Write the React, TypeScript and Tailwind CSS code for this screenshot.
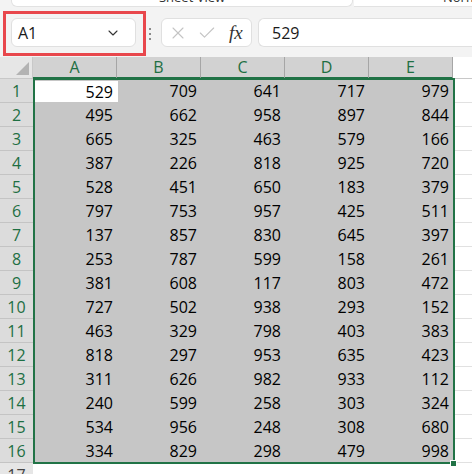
import { X, Check, ChevronDown } from "lucide-react";

const data: number[][] = [
  [529, 709, 641, 717, 979],
  [495, 662, 958, 897, 844],
  [665, 325, 463, 579, 166],
  [387, 226, 818, 925, 720],
  [528, 451, 650, 183, 379],
  [797, 753, 957, 425, 511],
  [137, 857, 830, 645, 397],
  [253, 787, 599, 158, 261],
  [381, 608, 117, 803, 472],
  [727, 502, 938, 293, 152],
  [463, 329, 798, 403, 383],
  [818, 297, 953, 635, 423],
  [311, 626, 982, 933, 112],
  [240, 599, 258, 303, 324],
  [534, 956, 248, 308, 680],
  [334, 829, 298, 479, 998],
];

const cols = ["A", "B", "C", "D", "E"];

export default function App() {
  return (
    <div className="relative w-[472px] h-[474px] overflow-hidden bg-white font-['Open_Sans',sans-serif] text-black">
      <Toolbar />
      <Grid />
      {/* selection frame */}
      <div className="absolute left-[33px] top-[78px] w-[422px] h-[386px] border-2 border-[#217346] pointer-events-none" />
      <div className="absolute left-[450px] top-[460px] w-[7px] h-[7px] bg-[#217346] border border-white" />
    </div>
  );
}

function Toolbar() {
  return (
    <div className="h-[57px] bg-[#f3f3f3] flex flex-col">
      <div className="h-[7px] flex overflow-hidden">
        <div className="ml-[11px] w-[342px] h-[7px] bg-white rounded-b-md border-x border-b border-[#e2e2e2] flex justify-center overflow-hidden">
          <span className="-mt-[12px] ml-[20px] text-[13px] text-[#333]">Sheet View</span>
        </div>
        <div className="ml-px flex-1 h-[7px] bg-white border-b border-[#e2e2e2] overflow-hidden">
          <span className="block -mt-[12px] ml-[89px] text-[13px] text-[#333]">Normal</span>
        </div>
      </div>
      <div className="mt-[4px] flex items-start">
        <div className="ml-[3px] w-[143px] h-[45px] border-[3px] border-[#e8474c] pl-[5px] pt-[4px]">
          <div className="w-[125px] h-[29px] bg-white border border-[#e0e0e0] rounded-md flex items-center pl-[6px] pr-[14px]">
            <span className="text-[16px] text-[#1a1a1a] flex-1">A1</span>
            <ChevronDown className="w-[16px] h-[16px] text-[#333]" strokeWidth={1.6} />
          </div>
        </div>
        <div className="ml-[3px] mt-[17px] flex flex-col gap-[3px]">
          <div className="w-[2px] h-[2px] bg-[#8a8a8a]" />
          <div className="w-[2px] h-[2px] bg-[#8a8a8a]" />
          <div className="w-[2px] h-[2px] bg-[#8a8a8a]" />
        </div>
        <div className="ml-[10px] mt-[7px] w-[91px] h-[29px] bg-white border border-[#e0e0e0] rounded-md flex items-center pl-[6px]">
          <X className="w-[20px] h-[20px] text-[#c4c4c4]" strokeWidth={1.3} />
          <Check className="ml-[9px] w-[20px] h-[20px] text-[#c4c4c4]" strokeWidth={1.3} />
          <span className="ml-[12px] text-[19px] italic font-['Liberation_Serif',serif] text-[#333] leading-none">fx</span>
        </div>
        <div className="ml-[6px] mt-[7px] flex-1 h-[29px] bg-white border border-r-0 border-[#e0e0e0] rounded-l-md flex items-center pl-[13px]">
          <span className="text-[16px] text-[#1a1a1a]">529</span>
        </div>
      </div>
    </div>
  );
}

function Grid() {
  return (
    <div className="flex flex-col">
      <div className="flex h-[22px]">
        <div className="relative w-[33px] bg-[#e6e6e6] border-r border-b border-[#c8c8c8]">
          <svg className="absolute right-[3px] bottom-[3px]" width="13" height="13" viewBox="0 0 13 13">
            <polygon points="13,0 13,13 0,13" fill="#b3b3b3" />
          </svg>
        </div>
        {cols.map((c) => (
          <div
            key={c}
            className="w-[84px] bg-[#d2d2d2] border-r border-[#a6a6a6] border-b-2 border-b-[#217346] flex items-center justify-center text-[16px] text-[#1e6f43]"
          >
            {c}
          </div>
        ))}
        <div className="flex-1 bg-white border-b border-[#c8c8c8]" />
      </div>
      {data.map((row, i) => (
        <div key={i} className="flex h-[24px]">
          <div className="w-[33px] bg-[#dcdcdc] border-b border-[#c4c4c4] flex items-center justify-center text-[16px] text-[#1e6f43]">
            {i + 1}
          </div>
          <div className="flex bg-[#c6c6c6] w-[422px]">
            {row.map((v, j) => {
              const first = i === 0 && j === 0;
              const w = first ? "w-[83px] ml-[2px] mt-[2px] mb-px bg-white" : j === 0 ? "w-[85px]" : "w-[84px]";
              return (
                <div key={j} className={"flex items-center justify-end pr-[5px] text-[16px] " + w}>
                  {v}
                </div>
              );
            })}
          </div>
          <div className="flex-1 bg-white border-b border-[#e1e1e1]" />
        </div>
      ))}
      <div className="flex h-[24px]">
        <div className="w-[33px] bg-[#e6e6e6] flex items-center justify-center text-[16px] text-[#444]">17</div>
        <div className="flex-1 bg-white" />
      </div>
    </div>
  );
}
